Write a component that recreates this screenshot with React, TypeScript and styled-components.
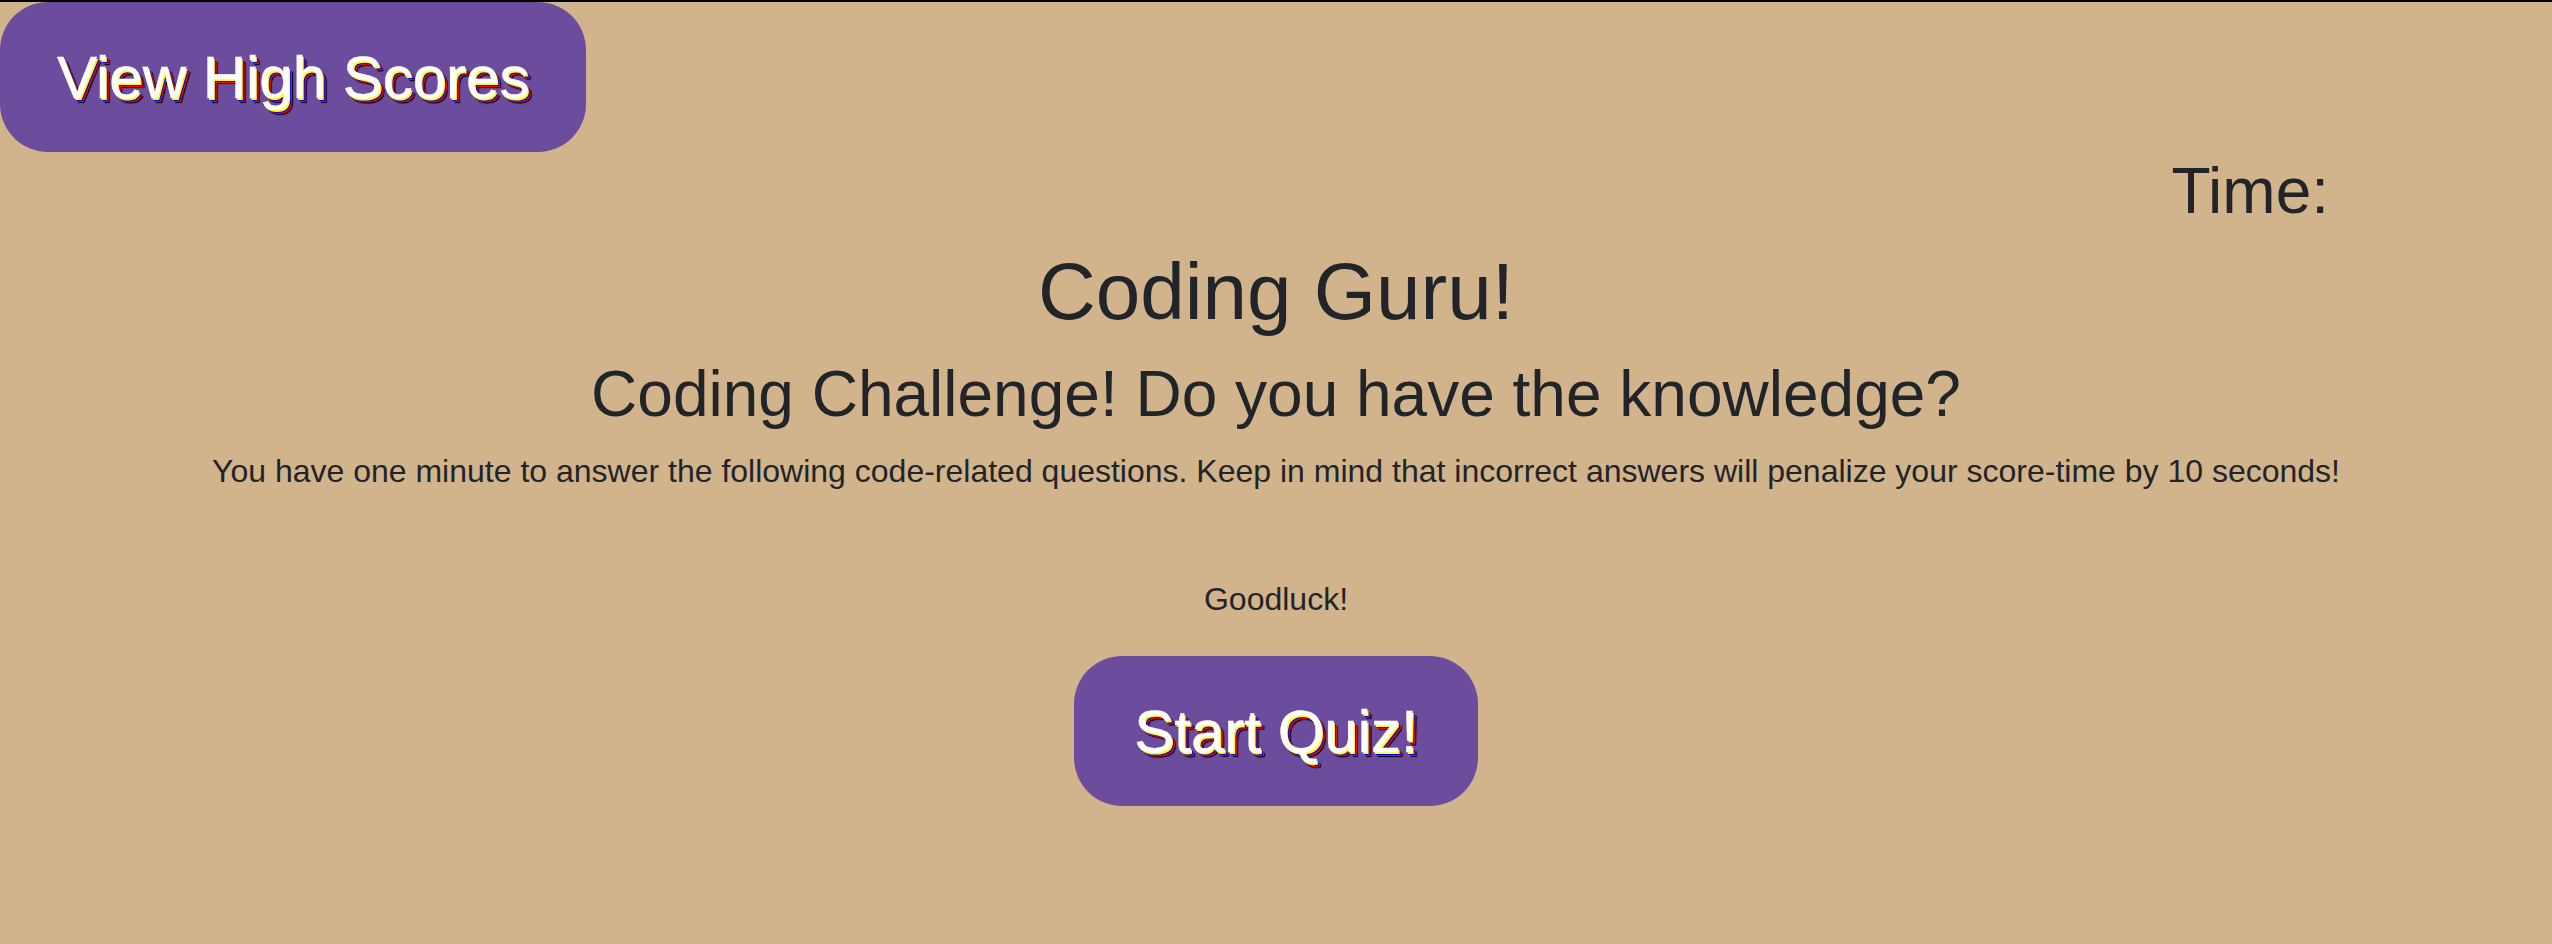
import React from "react";
import styled, { createGlobalStyle } from "styled-components";

const GlobalStyle = createGlobalStyle`
  html, body {
    margin: 0;
    padding: 0;
    background: #d2b48c;
  }
  body {
    font-family: "Liberation Sans", Arial, Helvetica, sans-serif;
    color: #212529;
  }
  * { box-sizing: border-box; }
`;

const Page = styled.div`
  min-height: 944px;
  border-top: 2px solid #000;
  background: #d2b48c;
  display: flex;
  flex-direction: column;
`;

const Header = styled.header`
  display: flex;
  flex-direction: column;
  align-items: flex-start;
`;

const PillButton = styled.button<{ $padX: number }>`
  display: inline-block;
  border: none;
  margin: 0;
  padding: 41px ${(p) => p.$padX}px 39px;
  border-radius: 48px;
  background: #6b4c9d;
  color: #fff;
  font-family: "Liberation Sans", Arial, Helvetica, sans-serif;
  font-size: 60px;
  font-weight: 400;
  line-height: 70px;
  white-space: nowrap;
  cursor: pointer;
  -webkit-text-stroke: 0.4px #fff;
  text-shadow: 1.5px 1.5px 0 #ffff00, 2.5px 2.5px 0 #0000ff,
    3.5px 3.5px 0 #ff0000, 4.5px 4.5px 1px #000;
`;

const TimeRow = styled.div`
  align-self: stretch;
  display: flex;
  justify-content: flex-end;
  padding: 2px 223px 0 0;
  font-size: 64px;
  line-height: 74px;
`;

const Main = styled.main`
  display: flex;
  flex-direction: column;
  align-items: center;
  text-align: center;
`;

const Title = styled.h1`
  margin: 16px 0 0;
  font-size: 80px;
  line-height: 96px;
  font-weight: 400;
`;

const Subtitle = styled.h2`
  margin: 16px 0 0;
  font-size: 64px;
  line-height: 77px;
  font-weight: 400;
`;

const Text = styled.p<{ $gap: number }>`
  margin: ${(p) => p.$gap}px 0 0;
  font-size: 32px;
  line-height: 48px;
`;

const StartWrap = styled.div`
  margin-top: 33px;
`;

export default function App() {
  return (
    <>
      <GlobalStyle />
      <Page>
        <Header>
          <PillButton $padX={57}>View High Scores</PillButton>
          <TimeRow>
            <span>Time:</span>
          </TimeRow>
        </Header>
        <Main>
          <Title>Coding Guru!</Title>
          <Subtitle>Coding Challenge! Do you have the knowledge?</Subtitle>
          <Text $gap={14}>
            You have one minute to answer the following code-related questions.
            Keep in mind that incorrect answers will penalize your score-time by
            10 seconds!
          </Text>
          <Text $gap={80}>Goodluck!</Text>
          <StartWrap>
            <PillButton $padX={60}>Start Quiz!</PillButton>
          </StartWrap>
        </Main>
      </Page>
    </>
  );
}
